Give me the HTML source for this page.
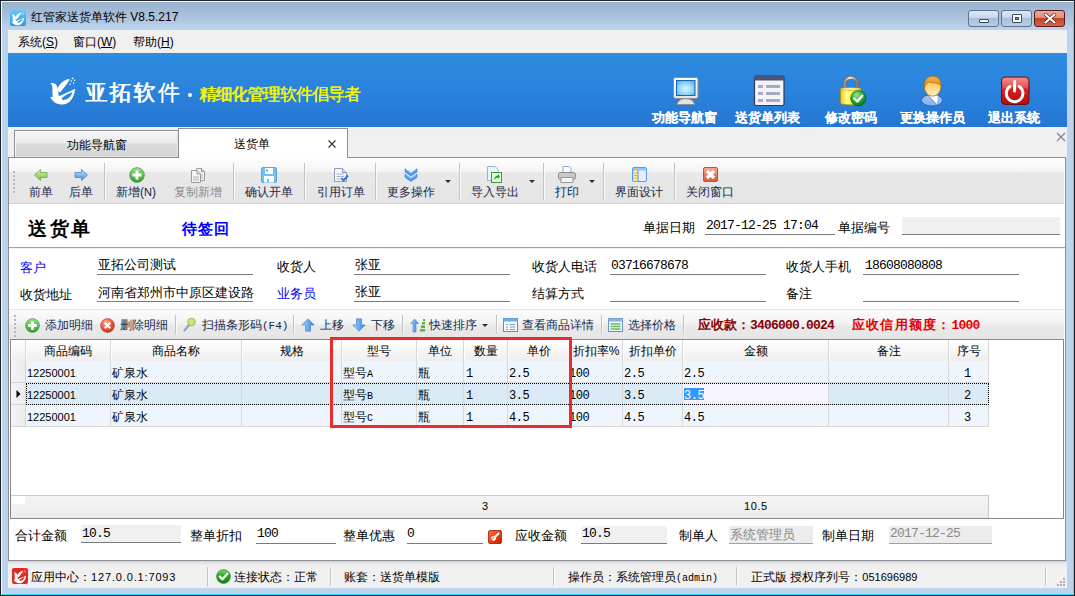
<!DOCTYPE html>
<html><head><meta charset="utf-8">
<style>
*{box-sizing:border-box;margin:0;padding:0}
html,body{width:1075px;height:596px;overflow:hidden}
body{position:relative;font-family:"Liberation Sans",sans-serif;font-size:12px;color:#000;background:#b9d1ea}
.a{position:absolute;white-space:nowrap}
.t12{font-size:12px;line-height:16px}
.t13{font-size:13px;line-height:16px}
.mono{font-family:"Liberation Mono",monospace}
.dig{font-family:"Liberation Mono",monospace;font-size:13px;letter-spacing:-0.8px;line-height:16px}
#frame{position:absolute;left:0;top:0;width:1075px;height:596px;border:1px solid #1e2226;background:#bcd4ec}
#hl{position:absolute;left:1px;top:1px;width:1073px;height:594px;border-left:1px solid #f4faff;border-top:1px solid #f4faff;border-right:1px solid #44d8fa;border-bottom:1px solid #44d8fa}
#title{position:absolute;left:2px;top:2px;width:1071px;height:28px;background:linear-gradient(#98b1cc,#a9c1dc 50%,#bcd4ec)}
#menu{position:absolute;left:8px;top:30px;width:1059px;height:23px;background:#f0f0f0}
#banner{position:absolute;left:8px;top:53px;width:1059px;height:74px;background:linear-gradient(#2d8ce0 0%,#2a83dc 50%,#2576d2 100%)}
#tabstrip{position:absolute;left:8px;top:127px;width:1059px;height:31px;background:#f0f0f0}
.wbtn{position:absolute;top:10px;height:17px;border:1px solid #5f7391;border-radius:3px;background:linear-gradient(#dce8f5 0%,#c6d6ea 45%,#a9bfd9 50%,#b9cde5 100%)}
.ico{position:absolute}
.blbl{position:absolute;color:#fff;font-weight:bold;font-size:13px;line-height:16px;white-space:nowrap;text-shadow:0.3px 0 0 #fff}

#tab1{position:absolute;left:14px;top:130px;width:165px;height:28px;border:1px solid #8a8e98;box-shadow:inset 1px 1px 0 #f8f8f8,inset -1px -1px 0 #e4e4e4;background:linear-gradient(#f6f6f6 0%,#ebebeb 45%,#dcdcdc 50%,#d4d4d4 100%)}
#tab2{position:absolute;left:178px;top:128px;width:170px;height:30px;border:1px solid #8a8e98;border-bottom:none;background:#fff}
#panel{position:absolute;left:8px;top:157px;width:1058px;height:404px;border:1px solid #8a8e98;background:#fff}
#tb{position:absolute;left:9px;top:158px;width:1055px;height:46px;background:linear-gradient(#fefefe 0%,#f4f4f4 30%,#e8e8e8 32%,#e5e5e5 100%);border-bottom:1px solid #d4d4d4}
.sep{position:absolute;width:2px;border-left:1px solid #c4c4c4;border-right:1px solid #fafafa}
.tbl{position:absolute;font-size:12px;line-height:16px;color:#15284a;white-space:nowrap}
.dd{position:absolute;width:0;height:0;border-left:3px solid transparent;border-right:3px solid transparent;border-top:3px solid #1e2f50}

.uline{position:absolute;height:2px;border-bottom:1px solid #7a7a7a;border-top:none}
.fld{position:absolute;background:#f0f0f0;border-bottom:1px solid #7a7a7a}
.lbl{position:absolute;font-size:13px;line-height:16px;white-space:nowrap;color:#000}
.blue{color:#0000ff}

#tb2{position:absolute;left:9px;top:309px;width:1055px;height:30px;background:linear-gradient(#fbfbfb 0%,#f3f3f3 45%,#e9e9e9 55%,#e6e6e6 100%);border-top:1px solid #e4e4e4}
.tl2{position:absolute;font-size:12px;line-height:16px;color:#15284a;white-space:nowrap}
#grid{position:absolute;left:10px;top:339px;width:1054px;height:180px;border:1px solid #828790;background:#fff}
.gh{position:absolute;top:340px;height:22px;background:linear-gradient(#ffffff 0%,#f7f7f7 50%,#eeeeee 100%);border-right:1px solid #d8d8d8;border-bottom:1px solid #d8d8d8;box-shadow:inset 1px 0 0 #fff;font-size:12px;line-height:22px;text-align:center;white-space:nowrap}
.gr{position:absolute;left:26px;width:963px;height:22px;background:#eef5fd;border-bottom:1px solid #d8d8d8}
.gv{position:absolute;width:1px;background:#d8d8d8}
.cell{position:absolute;font-size:12px;line-height:16px;white-space:nowrap}
.num{font-family:"Liberation Mono",monospace;font-size:12px;letter-spacing:-0.5px}
.cnum{font-family:"Liberation Sans",sans-serif;font-size:11px}
</style></head>
<body>

<div id="frame"></div>
<div id="hl"></div><div id="title"></div>
<!-- app icon -->
<svg class="ico" style="left:10px;top:10px;--hole:#36a6ea" width="16" height="16" viewBox="0 0 16 16">
 <defs><linearGradient id="appg" x1="0" y1="0" x2="0" y2="1"><stop offset="0" stop-color="#6cc8f4"/><stop offset="1" stop-color="#2a9ae4"/></linearGradient></defs>
 <rect x="0" y="0" width="16" height="16" rx="2" fill="url(#appg)"/>
 <svg x="-1.5" y="-1" width="20" height="19" viewBox="0 0 40 38">
 <path d="M6.5 11.2 C10 10.4 12.6 12 13.4 15.5 L14.6 22 C14.6 24.5 15.2 26.5 16.5 28.5 L10.5 28.5 C8.6 25.5 8 21 8.4 16.5 C8.5 14.2 7.8 12.4 6.5 11.2 Z" fill="#fff"/>
 <path d="M13 17.5 C15.5 11.5 20 8 25.8 6.8 C24.5 10.5 20.5 15 16.2 20.5 C15 20 13.8 19 13 17.5 Z" fill="#fff"/>
 <path d="M6.2 25 C8.5 30 13 32.5 18.5 32.5 C25.5 32.5 30.2 26 31.2 16.8 C27 19.5 21 21.2 16 23.8 C14 24.8 12 25.2 10 24.8 C8.6 24.8 7.2 25 6.2 25 Z" fill="#fff"/>
 <path d="M17.6 26.2 C20.8 23.2 24.8 21.2 28.4 20.2 C27 25 23.5 27.8 18.8 28 C18.2 27.5 17.8 26.8 17.6 26.2 Z" fill="#36a6ea"/>
 <g fill="#fff"><circle cx="28.5" cy="6.3" r="0.9"/><circle cx="30.6" cy="8.3" r="0.8"/><circle cx="27.3" cy="9" r="0.8"/><circle cx="29.6" cy="11" r="0.8"/><circle cx="26.2" cy="12.2" r="0.7"/></g>
</svg>
</svg>
<div class="a t12" style="left:31px;top:9px;color:#000">红管家送货单软件 V8.5.217</div>
<div class="wbtn" style="left:968px;width:31px"><div style="position:absolute;left:10px;top:8px;width:10px;height:4px;background:#fff;border:1px solid #3b4a5e;border-radius:1px"></div></div>
<div class="wbtn" style="left:1001px;width:31px"><div style="position:absolute;left:10px;top:3px;width:10px;height:9px;background:#fff;border:1px solid #3b4a5e;border-radius:1px"><div style="position:absolute;left:2px;top:2px;width:4px;height:3px;background:#7b93b5;border:1px solid #3b4a5e"></div></div></div>
<div class="wbtn" style="left:1034px;width:31px;border-color:#5a1a1a;background:linear-gradient(#eba89a 0%,#df8d7c 45%,#c4432b 50%,#d2644a 100%)">
 <svg style="position:absolute;left:9px;top:2px" width="12" height="11" viewBox="0 0 12 11"><path d="M1.5 1.5 L10.5 9.5 M10.5 1.5 L1.5 9.5" stroke="#5a2018" stroke-width="3.6" stroke-linecap="round"/><path d="M1.5 1.5 L10.5 9.5 M10.5 1.5 L1.5 9.5" stroke="#fff" stroke-width="2.2" stroke-linecap="round"/></svg>
</div>

<div id="menu"></div>
<div class="a t12" style="left:18px;top:34px">系统(<u>S</u>)</div>
<div class="a t12" style="left:73px;top:34px">窗口(<u>W</u>)</div>
<div class="a t12" style="left:133px;top:34px">帮助(<u>H</u>)</div>

<div id="banner"></div>
<!-- banner logo -->
<svg class="ico" style="left:44px;top:72px" width="40" height="38" viewBox="0 0 40 38">
 <path d="M6.5 11.2 C10 10.4 12.6 12 13.4 15.5 L14.6 22 C14.6 24.5 15.2 26.5 16.5 28.5 L10.5 28.5 C8.6 25.5 8 21 8.4 16.5 C8.5 14.2 7.8 12.4 6.5 11.2 Z" fill="#fff"/>
 <path d="M13 17.5 C15.5 11.5 20 8 25.8 6.8 C24.5 10.5 20.5 15 16.2 20.5 C15 20 13.8 19 13 17.5 Z" fill="#fff"/>
 <path d="M6.2 25 C8.5 30 13 32.5 18.5 32.5 C25.5 32.5 30.2 26 31.2 16.8 C27 19.5 21 21.2 16 23.8 C14 24.8 12 25.2 10 24.8 C8.6 24.8 7.2 25 6.2 25 Z" fill="#fff"/>
 <path d="M17.6 26.2 C20.8 23.2 24.8 21.2 28.4 20.2 C27 25 23.5 27.8 18.8 28 C18.2 27.5 17.8 26.8 17.6 26.2 Z" fill="#2a86dc"/>
 <g fill="#fff"><circle cx="28.5" cy="6.3" r="0.9"/><circle cx="30.6" cy="8.3" r="0.8"/><circle cx="27.3" cy="9" r="0.8"/><circle cx="29.6" cy="11" r="0.8"/><circle cx="26.2" cy="12.2" r="0.7"/></g>
</svg>
<div class="a" style="left:85px;top:79px;font-size:22px;line-height:28px;letter-spacing:2.2px;color:#fff;text-shadow:0.7px 0 0 #fff">亚拓软件</div>
<div class="a" style="left:188px;top:93px;width:4px;height:4px;border-radius:2px;background:#fff"></div>
<div class="a" style="left:199px;top:85px;font-size:17px;line-height:20px;letter-spacing:-0.9px;color:#f6f800;text-shadow:0.5px 0 0 #f6f800">精细化管理软件倡导者</div>

<!-- monitor -->
<svg class="ico" style="left:669px;top:75px" width="32" height="32" viewBox="0 0 32 32">
 <defs><radialGradient id="scr" cx="0.5" cy="0.55" r="0.6"><stop offset="0" stop-color="#d8f4ff"/><stop offset="0.6" stop-color="#98d8f8"/><stop offset="1" stop-color="#5ab4ec"/></radialGradient>
 <linearGradient id="mfr" x1="0" y1="0" x2="0" y2="1"><stop offset="0" stop-color="#ffffff"/><stop offset="1" stop-color="#e4e4e4"/></linearGradient></defs>
 <rect x="4.5" y="2.5" width="24.5" height="21" rx="2" fill="url(#mfr)" stroke="#8c8c8c" stroke-width="1"/>
 <rect x="7.5" y="5.5" width="18.5" height="15" fill="url(#scr)" stroke="#1a64b0" stroke-width="1"/>
 <path d="M8 29.5 C9 25.5 12 23.8 16.8 23.8 C21.5 23.8 24.5 25.5 25.5 29.5 Z" fill="#e4e4e4" stroke="#8c8c8c" stroke-width="0.9"/>
</svg>
<div class="blbl" style="left:652px;top:110px">功能导航窗</div>

<!-- list -->
<svg class="ico" style="left:753px;top:75px" width="32" height="32" viewBox="0 0 32 32">
 <rect x="1.5" y="1" width="29.5" height="29.5" rx="1.5" fill="#f4f4f8" stroke="#2e3a58" stroke-width="1.2"/>
 <rect x="1.5" y="1" width="29.5" height="4.5" fill="#4a5478"/>
 <rect x="5" y="10" width="5" height="3" fill="#a9a9c6"/><rect x="13" y="10" width="14" height="3" fill="#a9a9c6"/>
 <rect x="5" y="17" width="5" height="3" fill="#a9a9c6"/><rect x="13" y="17" width="14" height="3" fill="#a9a9c6"/>
 <rect x="5" y="24" width="5" height="3" fill="#a9a9c6"/><rect x="13" y="24" width="14" height="3" fill="#a9a9c6"/>
</svg>
<div class="blbl" style="left:735px;top:110px">送货单列表</div>

<!-- lock -->
<svg class="ico" style="left:837px;top:75px" width="32" height="32" viewBox="0 0 32 32">
 <defs><linearGradient id="lk" x1="0" y1="0" x2="1" y2="0"><stop offset="0" stop-color="#e8cc10"/><stop offset="0.3" stop-color="#ffff90"/><stop offset="0.65" stop-color="#fae828"/><stop offset="1" stop-color="#d8b000"/></linearGradient>
 <linearGradient id="shk" x1="0" y1="0" x2="1" y2="0"><stop offset="0" stop-color="#8a8a8a"/><stop offset="0.4" stop-color="#e8e8e8"/><stop offset="1" stop-color="#7a7a7a"/></linearGradient>
 <radialGradient id="gc" cx="0.4" cy="0.3" r="0.75"><stop offset="0" stop-color="#8ee890"/><stop offset="0.55" stop-color="#2aa83a"/><stop offset="1" stop-color="#0e6a1a"/></radialGradient></defs>
 <path d="M7.5 15 L7.5 8.5 C7.5 0.8 20.5 0.8 20.5 8.5 L20.5 15" fill="none" stroke="#6a6a6a" stroke-width="4"/>
 <path d="M7.5 15 L7.5 8.5 C7.5 0.8 20.5 0.8 20.5 8.5 L20.5 15" fill="none" stroke="url(#shk)" stroke-width="2.4"/>
 <path d="M3.5 14 L24 14 L24 28 C24 30.5 3.5 30.5 3.5 28Z" fill="url(#lk)" stroke="#a88a10" stroke-width="0.8"/>
 <ellipse cx="13.75" cy="14" rx="10.25" ry="1.3" fill="#fff8a0" stroke="#b89a18" stroke-width="0.6"/>
 <circle cx="21.3" cy="23.3" r="7.6" fill="url(#gc)" stroke="#0c5a14" stroke-width="0.7"/>
 <path d="M17.3 23.5 L20.3 26.5 L25.3 20.8" fill="none" stroke="#fff" stroke-width="2.4" stroke-linecap="round" stroke-linejoin="round"/>
</svg>
<div class="blbl" style="left:825px;top:110px">修改密码</div>

<!-- person -->
<svg class="ico" style="left:916px;top:75px" width="32" height="32" viewBox="0 0 32 32">
 <defs><linearGradient id="fc" x1="0" y1="0" x2="0" y2="1"><stop offset="0" stop-color="#ffb830"/><stop offset="1" stop-color="#fff0c0"/></linearGradient>
 <linearGradient id="sh" x1="0" y1="0" x2="0" y2="1"><stop offset="0" stop-color="#a8c4f0"/><stop offset="1" stop-color="#80b0f0"/></linearGradient>
 <linearGradient id="hr" x1="0" y1="0" x2="0" y2="1"><stop offset="0" stop-color="#f0b050"/><stop offset="1" stop-color="#d88a10"/></linearGradient></defs>
 <ellipse cx="16" cy="25.3" rx="10.6" ry="5.8" fill="url(#sh)" stroke="#2a58b8" stroke-width="0.9"/>
 <path d="M12.5 20.5 L22 20.5 L21 29.5Z" fill="#fff"/>
 <path d="M12.5 20.5 L21 29.5" stroke="#5a80c8" stroke-width="0.6"/>
 <ellipse cx="16.6" cy="11.2" rx="8.4" ry="10" fill="url(#fc)" stroke="#b87010" stroke-width="0.8"/>
 <path d="M8.3 12.5 C7.8 5 11.5 1.3 16.6 1.3 C22 1.3 25 4.5 25 10.5 C23 8.5 20 8.2 17.5 7.8 C15 7.4 13 6.8 11 8.2 C10 9 9.5 11 8.3 12.5Z" fill="url(#hr)" stroke="#a86010" stroke-width="0.6"/>
</svg>
<div class="blbl" style="left:900px;top:110px">更换操作员</div>

<!-- power -->
<svg class="ico" style="left:998px;top:75px" width="32" height="32" viewBox="0 0 32 32">
 <defs><linearGradient id="pw" x1="0" y1="0" x2="0" y2="1"><stop offset="0" stop-color="#f07878"/><stop offset="0.45" stop-color="#d82020"/><stop offset="1" stop-color="#b00c0c"/></linearGradient></defs>
 <rect x="3.5" y="2" width="27.5" height="27.5" rx="3.5" fill="url(#pw)" stroke="#7a0a0a" stroke-width="1"/>
 <path d="M4.5 14 C10 11 24 11 30 14 L30 5 C30 3.5 29 3 27.5 3 L7 3 C5.5 3 4.5 3.5 4.5 5Z" fill="#fff" opacity="0.18"/>
 <path d="M12 11.5 A8.3 8.3 0 1 0 21.2 11.5" fill="none" stroke="#fff" stroke-width="3" stroke-linecap="round"/>
 <path d="M16.6 6.5 L16.6 16" stroke="#fff" stroke-width="3" stroke-linecap="round"/>
</svg>
<div class="blbl" style="left:988px;top:110px">退出系统</div>

<div id="tabstrip"></div>
<div id="panel"></div>
<div id="tab1"></div>
<div class="a t12" style="left:67px;top:137px;color:#000">功能导航窗</div>
<div id="tab2"></div>
<div class="a t12" style="left:234px;top:136px;color:#000">送货单</div>
<svg class="ico" style="left:327px;top:139px" width="10" height="10" viewBox="0 0 10 10"><path d="M1.5 1.5 L8.5 8.5 M8.5 1.5 L1.5 8.5" stroke="#333" stroke-width="1.1"/></svg>
<svg class="ico" style="left:1056px;top:132px" width="10" height="10" viewBox="0 0 10 10"><path d="M1 1 L9 9 M9 1 L1 9" stroke="#7a8290" stroke-width="1.1"/></svg>

<div id="tb"></div>
<!-- gripper -->
<svg class="ico" style="left:13px;top:170px" width="3" height="24" viewBox="0 0 3 24">
 <g fill="#b8b8b8"><rect x="0" y="1" width="2" height="2"/><rect x="0" y="5" width="2" height="2"/><rect x="0" y="9" width="2" height="2"/><rect x="0" y="13" width="2" height="2"/><rect x="0" y="17" width="2" height="2"/><rect x="0" y="21" width="2" height="2"/></g>
</svg>
<!-- prev -->
<svg class="ico" style="left:33px;top:167px" width="16" height="16" viewBox="0 0 16 16">
 <defs><linearGradient id="ga" x1="0" y1="0" x2="0" y2="1"><stop offset="0" stop-color="#d8f8b0"/><stop offset="1" stop-color="#70c040"/></linearGradient></defs>
 <path d="M1.5 8 L7.5 2.5 L7.5 5.5 L14 5.5 L14 10.5 L7.5 10.5 L7.5 13.5Z" fill="url(#ga)" stroke="#6aa84a" stroke-width="0.8"/>
</svg>
<div class="tbl" style="left:29px;top:184px">前单</div>
<svg class="ico" style="left:73px;top:167px" width="16" height="16" viewBox="0 0 16 16">
 <defs><linearGradient id="gb" x1="0" y1="0" x2="0" y2="1"><stop offset="0" stop-color="#cfe6ff"/><stop offset="1" stop-color="#3a88e0"/></linearGradient></defs>
 <path d="M14.5 8 L8.5 2.5 L8.5 5.5 L2 5.5 L2 10.5 L8.5 10.5 L8.5 13.5Z" fill="url(#gb)" stroke="#4a88c8" stroke-width="0.8"/>
</svg>
<div class="tbl" style="left:69px;top:184px">后单</div>
<div class="sep" style="left:104px;top:163px;height:37px"></div>
<!-- add -->
<svg class="ico" style="left:129px;top:167px" width="16" height="16" viewBox="0 0 16 16">
 <defs><linearGradient id="gad" x1="0" y1="0" x2="0" y2="1"><stop offset="0" stop-color="#98e488"/><stop offset="0.5" stop-color="#5cc050"/><stop offset="1" stop-color="#3a9a34"/></linearGradient></defs>
 <circle cx="8" cy="8" r="7.4" fill="url(#gad)" stroke="#3a8a3a" stroke-width="0.6"/>
 <path d="M8 3.5 L8 12.5 M3.5 8 L12.5 8" stroke="#fff" stroke-width="3"/>
</svg>
<div class="tbl" style="left:116px;top:184px">新增(<span style="font-size:11px">N</span>)</div>
<!-- copy -->
<svg class="ico" style="left:190px;top:167px" width="16" height="16" viewBox="0 0 16 16">
 <path d="M6.5 1.5 L11.5 1.5 L14.5 4.5 L14.5 13.5 L6.5 13.5Z" fill="#f2f2f2" stroke="#9a9a9a"/>
 <path d="M11.5 1.5 L11.5 4.5 L14.5 4.5" fill="#ddd" stroke="#9a9a9a"/>
 <path d="M1.5 3.5 L7 3.5 L10.5 7 L10.5 15.5 L1.5 15.5Z" fill="#f6f6f6" stroke="#9a9a9a"/>
 <path d="M7 3.5 L7 7 L10.5 7" fill="#e0e0e0" stroke="#9a9a9a"/>
 <rect x="3" y="9" width="6" height="5" fill="#d4d4d4"/>
 <path d="M12 6.5 L12 12" stroke="#c0c0c0"/>
</svg>
<div class="tbl" style="left:174px;top:184px;color:#8c8c8c">复制新增</div>
<div class="sep" style="left:233px;top:163px;height:37px"></div>
<!-- save -->
<svg class="ico" style="left:261px;top:167px" width="16" height="16" viewBox="0 0 16 16">
 <rect x="0.5" y="0.5" width="15" height="15" rx="1.5" fill="#6cc0f2" stroke="#58a8e0"/>
 <rect x="4" y="1" width="8" height="6" fill="#fff"/>
 <rect x="5" y="2.5" width="2" height="2" fill="#58a8e0"/>
 <rect x="3" y="9" width="10" height="6.5" fill="#fff"/>
 <rect x="6" y="12" width="2" height="3.5" fill="#6cc0f2"/>
</svg>
<div class="tbl" style="left:245px;top:184px">确认开单</div>
<div class="sep" style="left:304px;top:163px;height:37px"></div>
<!-- quote -->
<svg class="ico" style="left:333px;top:167px" width="16" height="16" viewBox="0 0 16 16">
 <path d="M1.5 1.5 L9.5 1.5 L13.5 5.5 L13.5 14.5 L1.5 14.5Z" fill="#f4f6fb" stroke="#8e9ab8"/>
 <path d="M9.5 1.5 L9.5 5.5 L13.5 5.5" fill="#dde2ee" stroke="#8e9ab8"/>
 <path d="M3.5 7 L11 7 M3.5 9.5 L11 9.5 M3.5 12 L8 12" stroke="#aab4cc"/>
 <path d="M8.5 11 L10.5 13.5 L15 8.5" fill="none" stroke="#2a72d8" stroke-width="1.9"/>
</svg>
<div class="tbl" style="left:317px;top:184px">引用订单</div>
<div class="sep" style="left:375px;top:163px;height:37px"></div>
<!-- more -->
<svg class="ico" style="left:403px;top:167px" width="16" height="16" viewBox="0 0 16 16">
 <path d="M2 1.8 L8 5.8 L14 1.8 L14 5 L8 9 L2 5Z" fill="#4a9af0" stroke="#3a80d8" stroke-width="0.6" stroke-linejoin="round"/>
 <path d="M2 7.2 L8 11.2 L14 7.2 L14 10.4 L8 14.4 L2 10.4Z" fill="#4a9af0" stroke="#3a80d8" stroke-width="0.6" stroke-linejoin="round"/>
 <path d="M3 2.6 L8 6 L13 2.6 M3 8 L8 11.4 L13 8" fill="none" stroke="#a8d4ff" stroke-width="0.8"/>
</svg>
<div class="tbl" style="left:387px;top:184px">更多操作</div>
<div class="dd" style="left:445px;top:180px"></div>
<div class="sep" style="left:459px;top:163px;height:37px"></div>
<!-- import export -->
<svg class="ico" style="left:486px;top:166px" width="17" height="17" viewBox="0 0 17 17">
 <path d="M1.5 0.5 L9 0.5 L12 3.5 L12 14.5 L1.5 14.5Z" fill="#eef4fc" stroke="#9ab0d0"/>
 <rect x="5.5" y="6.5" width="10" height="10" fill="#e8f8e0" stroke="#3a9a3a"/>
 <path d="M8 14 C8 11 10 9.5 12 9.5 L12 8 L14 10.5 L12 13 L12 11.5 C10.5 11.5 9 12.5 8 14Z" fill="#2a9a2a"/>
</svg>
<div class="tbl" style="left:471px;top:184px">导入导出</div>
<div class="dd" style="left:529px;top:180px"></div>
<div class="sep" style="left:543px;top:163px;height:37px"></div>
<!-- print -->
<svg class="ico" style="left:558px;top:166px" width="18" height="17" viewBox="0 0 18 17">
 <path d="M5 0.5 L11 0.5 L13 2.5 L13 7 L5 7Z" fill="#fff" stroke="#8aa8d8"/>
 <rect x="0.5" y="6.5" width="17" height="7" rx="2" fill="#c8c8c8" stroke="#8a8a8a"/>
 <rect x="3" y="11.5" width="12" height="5" fill="#f4f4f4" stroke="#9a9a9a"/>
</svg>
<div class="tbl" style="left:555px;top:184px">打印</div>
<div class="dd" style="left:589px;top:180px"></div>
<div class="sep" style="left:603px;top:163px;height:37px"></div>
<!-- design -->
<svg class="ico" style="left:632px;top:167px" width="15" height="15" viewBox="0 0 15 15">
 <rect x="0.5" y="0.5" width="14" height="14" rx="1.5" fill="#eceaff" stroke="#4aa0f0"/>
 <rect x="1" y="1" width="13" height="2.5" fill="#8ac8f8"/>
 <rect x="1.5" y="3.5" width="4" height="10.5" fill="#fff4b0" stroke="#f0c040" stroke-width="0.6"/>
 <path d="M6 3.5 L6 14" stroke="#4aa0f0"/>
 <path d="M2.5 6 L4.5 6 M2.5 8.5 L4.5 8.5 M2.5 11 L4.5 11" stroke="#e86a30" stroke-width="1.2"/>
</svg>
<div class="tbl" style="left:615px;top:184px">界面设计</div>
<div class="sep" style="left:674px;top:163px;height:37px"></div>
<!-- close -->
<svg class="ico" style="left:703px;top:167px" width="15" height="15" viewBox="0 0 15 15">
 <defs><linearGradient id="gx" x1="0" y1="0" x2="0" y2="1"><stop offset="0" stop-color="#f8a890"/><stop offset="1" stop-color="#e05838"/></linearGradient></defs>
 <rect x="0.5" y="0.5" width="14" height="14" rx="1.5" fill="url(#gx)" stroke="#c84a30"/>
 <path d="M4 4 L11 11 M11 4 L4 11" stroke="#fff" stroke-width="3.2"/>
</svg>
<div class="tbl" style="left:686px;top:184px">关闭窗口</div>



<!-- header -->
<div class="a" style="left:28px;top:218px;font-size:19px;line-height:22px;font-weight:bold;letter-spacing:2.5px">送货单</div>
<div class="a" style="left:182px;top:220px;font-size:15px;line-height:18px;font-weight:bold;color:#0000ff;letter-spacing:1px">待签回</div>
<div class="lbl" style="left:643px;top:220px">单据日期</div>
<div class="a dig" style="left:706px;top:218px">2017-12-25 17:04</div>
<div class="a" style="left:705px;top:233px;width:130px;height:2px;border-bottom:1px solid #7a7a7a"></div>
<div class="lbl" style="left:838px;top:220px">单据编号</div>
<div class="fld" style="left:902px;top:217px;width:158px;height:18px"></div>
<div class="a" style="left:9px;top:247px;width:1056px;height:2px;border-top:1px solid #a0a0a0;border-bottom:1px solid #f0f0f0"></div>

<!-- form row 1 -->
<div class="lbl blue" style="left:20px;top:260px">客户</div>
<div class="lbl" style="left:98px;top:257px">亚拓公司测试</div>
<div class="a" style="left:97px;top:273px;width:156px;height:2px;border-bottom:1px solid #7a7a7a"></div>
<div class="lbl" style="left:277px;top:259px">收货人</div>
<div class="lbl" style="left:355px;top:257px">张亚</div>
<div class="a" style="left:354px;top:273px;width:156px;height:2px;border-bottom:1px solid #7a7a7a"></div>
<div class="lbl" style="left:532px;top:259px">收货人电话</div>
<div class="a dig" style="left:611px;top:258px">03716678678</div>
<div class="a" style="left:610px;top:273px;width:156px;height:2px;border-bottom:1px solid #7a7a7a"></div>
<div class="lbl" style="left:786px;top:259px">收货人手机</div>
<div class="a dig" style="left:865px;top:258px">18608080808</div>
<div class="a" style="left:863px;top:273px;width:156px;height:2px;border-bottom:1px solid #7a7a7a"></div>
<!-- form row 2 -->
<div class="lbl" style="left:20px;top:287px">收货地址</div>
<div class="lbl" style="left:98px;top:285px">河南省郑州市中原区建设路</div>
<div class="a" style="left:97px;top:300px;width:156px;height:2px;border-bottom:1px solid #7a7a7a"></div>
<div class="lbl blue" style="left:277px;top:286px">业务员</div>
<div class="lbl" style="left:355px;top:284px">张亚</div>
<div class="a" style="left:354px;top:300px;width:156px;height:2px;border-bottom:1px solid #7a7a7a"></div>
<div class="lbl" style="left:532px;top:286px">结算方式</div>
<div class="a" style="left:610px;top:300px;width:156px;height:2px;border-bottom:1px solid #7a7a7a"></div>
<div class="lbl" style="left:786px;top:286px">备注</div>
<div class="a" style="left:863px;top:300px;width:156px;height:2px;border-bottom:1px solid #7a7a7a"></div>

<!-- detail toolbar -->
<div id="tb2"></div>
<svg class="ico" style="left:14px;top:314px" width="3" height="23" viewBox="0 0 3 23">
 <g fill="#b8b8b8"><rect x="0" y="1" width="2" height="2"/><rect x="0" y="5" width="2" height="2"/><rect x="0" y="9" width="2" height="2"/><rect x="0" y="13" width="2" height="2"/><rect x="0" y="17" width="2" height="2"/><rect x="0" y="21" width="2" height="2"/></g>
</svg>
<svg class="ico" style="left:25px;top:318px" width="15" height="15" viewBox="0 0 16 16">
 <circle cx="8" cy="8" r="7.4" fill="url(#gad)" stroke="#3a8a3a" stroke-width="0.6"/>
 <path d="M8 3.5 L8 12.5 M3.5 8 L12.5 8" stroke="#fff" stroke-width="3"/>
</svg>
<div class="tl2" style="left:45px;top:317px">添加明细</div>
<svg class="ico" style="left:100px;top:318px" width="15" height="15" viewBox="0 0 16 16">
 <defs><radialGradient id="gdl" cx="0.4" cy="0.3" r="0.75"><stop offset="0" stop-color="#ffb0a0"/><stop offset="0.55" stop-color="#e85a40"/><stop offset="1" stop-color="#b83020"/></radialGradient></defs>
 <circle cx="8" cy="8" r="7.4" fill="url(#gdl)" stroke="#b03a2a" stroke-width="0.6"/>
 <path d="M5 5 L11 11 M11 5 L5 11" stroke="#fff" stroke-width="2.4"/>
</svg>
<div class="tl2" style="left:120px;top:317px">删除明细</div>
<div class="sep" style="left:175px;top:315px;height:19px"></div>
<svg class="ico" style="left:183px;top:317px" width="13" height="15" viewBox="0 0 13 15">
 <path d="M1.5 13.5 L6 8" stroke="#9aa0c8" stroke-width="2.2" stroke-linecap="round"/>
 <circle cx="8.5" cy="5" r="3.8" fill="#c8e880" stroke="#8ab040" stroke-width="0.8"/>
</svg>
<div class="tl2" style="left:202px;top:317px">扫描条形码<span class="mono" style="font-size:11px">(F4)</span></div>
<div class="sep" style="left:293px;top:315px;height:19px"></div>
<svg class="ico" style="left:301px;top:318px" width="14" height="14" viewBox="0 0 14 14">
 <defs><linearGradient id="gu" x1="0" y1="0" x2="1" y2="0"><stop offset="0" stop-color="#a8d8ff"/><stop offset="1" stop-color="#2a80e0"/></linearGradient></defs>
 <path d="M7 0.8 L13.2 7 L9.5 7 L9.5 13.2 L4.5 13.2 L4.5 7 L0.8 7Z" fill="url(#gu)" stroke="#3a7ac8" stroke-width="0.6"/>
</svg>
<div class="tl2" style="left:320px;top:317px">上移</div>
<svg class="ico" style="left:352px;top:318px" width="14" height="14" viewBox="0 0 14 14">
 <path d="M7 13.2 L13.2 7 L9.5 7 L9.5 0.8 L4.5 0.8 L4.5 7 L0.8 7Z" fill="url(#gu)" stroke="#3a7ac8" stroke-width="0.6"/>
</svg>
<div class="tl2" style="left:371px;top:317px">下移</div>
<div class="sep" style="left:402px;top:315px;height:19px"></div>
<svg class="ico" style="left:410px;top:318px" width="16" height="15" viewBox="0 0 16 15">
 <path d="M4.5 1 L8.5 5.5 L6 5.5 L6 14 L3 14 L3 5.5 L0.5 5.5Z" fill="url(#gu)" stroke="#3a7ac8" stroke-width="0.5"/>
 <rect x="10" y="11" width="5" height="2.5" fill="#5ab040"/><rect x="11" y="7.5" width="4" height="2.5" fill="#5ab040"/><rect x="12" y="4" width="3" height="2.5" fill="#5ab040"/><rect x="13" y="1" width="2" height="2" fill="#5ab040"/>
</svg>
<div class="tl2" style="left:429px;top:317px">快速排序</div>
<div class="dd" style="left:482px;top:324px"></div>
<div class="sep" style="left:496px;top:315px;height:19px"></div>
<svg class="ico" style="left:503px;top:318px" width="15" height="14" viewBox="0 0 15 14">
 <rect x="0.5" y="0.5" width="14" height="13" fill="#f4f8ff" stroke="#4a90d8"/>
 <rect x="0.5" y="0.5" width="14" height="3" fill="#6ab0f0"/>
 <path d="M3 6.5 L5 6.5 M6.5 6.5 L12 6.5 M3 9 L5 9 M6.5 9 L12 9 M3 11.5 L5 11.5 M6.5 11.5 L12 11.5" stroke="#8a9ab8"/>
</svg>
<div class="tl2" style="left:522px;top:317px">查看商品详情</div>
<div class="sep" style="left:601px;top:315px;height:19px"></div>
<svg class="ico" style="left:608px;top:318px" width="15" height="14" viewBox="0 0 15 14">
 <rect x="0.5" y="0.5" width="14" height="13" fill="#f0f6ff" stroke="#6a90c0"/>
 <rect x="0.5" y="0.5" width="14" height="3" fill="#8ab4e0"/>
 <path d="M2.5 6 L12.5 6 M2.5 8.5 L12.5 8.5 M2.5 11 L12.5 11" stroke="#70b860" stroke-width="1.4"/>
</svg>
<div class="tl2" style="left:628px;top:317px">选择价格</div>
<div class="sep" style="left:683px;top:315px;height:19px"></div>
<div class="a" style="left:698px;top:317px;font-size:13px;line-height:16px;font-weight:bold;color:#8b0000">应收款：<span class="mono" style="letter-spacing:-0.8px">3406000.0024</span></div>
<div class="a" style="left:852px;top:317px;font-size:13px;line-height:16px;font-weight:bold;color:#e80000;letter-spacing:1.2px">应收信用额度：<span class="mono" style="letter-spacing:-0.8px">1000</span></div>
<!-- grid -->
<div id="grid"></div>
<div class="gh" style="left:11px;width:15px"></div>
<div class="gh" style="left:26px;width:85px">商品编码</div>
<div class="gh" style="left:111px;width:131px">商品名称</div>
<div class="gh" style="left:242px;width:100px">规格</div>
<div class="gh" style="left:342px;width:75px">型号</div>
<div class="gh" style="left:417px;width:47px">单位</div>
<div class="gh" style="left:464px;width:44px">数量</div>
<div class="gh" style="left:508px;width:62px">单价</div>
<div class="gh" style="left:570px;width:53px">折扣率%</div>
<div class="gh" style="left:623px;width:60px">折扣单价</div>
<div class="gh" style="left:683px;width:146px">金额</div>
<div class="gh" style="left:829px;width:120px">备注</div>
<div class="gh" style="left:949px;width:40px">序号</div>
<div class="gr" style="top:361px;background:#eef5fd"></div>
<div class="a" style="left:11px;top:361px;width:15px;height:22px;background:linear-gradient(90deg,#f4f4f4,#ececec);border-right:1px solid #d5d5d5;border-bottom:1px solid #d5d5d5"></div>
<div class="gr" style="top:383px;background:#daeaf6"></div>
<div class="a" style="left:11px;top:383px;width:15px;height:22px;background:linear-gradient(90deg,#f4f4f4,#ececec);border-right:1px solid #d5d5d5;border-bottom:1px solid #d5d5d5"></div>
<div class="gr" style="top:405px;background:#eef5fd"></div>
<div class="a" style="left:11px;top:405px;width:15px;height:22px;background:linear-gradient(90deg,#f4f4f4,#ececec);border-right:1px solid #d5d5d5;border-bottom:1px solid #d5d5d5"></div>
<div class="gv" style="left:110px;top:361px;height:66px"></div>
<div class="gv" style="left:241px;top:361px;height:66px"></div>
<div class="gv" style="left:341px;top:361px;height:66px"></div>
<div class="gv" style="left:416px;top:361px;height:66px"></div>
<div class="gv" style="left:463px;top:361px;height:66px"></div>
<div class="gv" style="left:507px;top:361px;height:66px"></div>
<div class="gv" style="left:569px;top:361px;height:66px"></div>
<div class="gv" style="left:622px;top:361px;height:66px"></div>
<div class="gv" style="left:682px;top:361px;height:66px"></div>
<div class="gv" style="left:828px;top:361px;height:66px"></div>
<div class="gv" style="left:948px;top:361px;height:66px"></div>
<div class="gv" style="left:988px;top:361px;height:66px"></div>
<div class="a" style="left:683px;top:384px;width:145px;height:20px;background:#f6f4fe"></div>
<div class="a" style="left:26px;top:383px;width:963px;height:22px;border:1px dotted #000"></div>
<svg class="ico" style="left:16px;top:390px" width="5" height="8" viewBox="0 0 5 8"><path d="M0.5 0 L4.5 4 L0.5 8Z" fill="#000"/></svg>
<div class="cell cnum" style="left:27px;top:365px">12250001</div>
<div class="cell" style="left:112px;top:365px">矿泉水</div>
<div class="cell" style="left:343px;top:365px">型号<span class="mono" style="font-size:10px">A</span></div>
<div class="cell" style="left:418px;top:365px">瓶</div>
<div class="cell num" style="left:466px;top:366px">1</div>
<div class="cell num" style="left:509px;top:366px">2.5</div>
<div class="cell num" style="left:569px;top:366px">100</div>
<div class="cell num" style="left:624px;top:366px">2.5</div>
<div class="cell num" style="left:684px;top:366px">2.5</div>
<div class="cell num" style="left:964px;top:366px">1</div>
<div class="cell cnum" style="left:27px;top:387px">12250001</div>
<div class="cell" style="left:112px;top:387px">矿泉水</div>
<div class="cell" style="left:343px;top:387px">型号<span class="mono" style="font-size:10px">B</span></div>
<div class="cell" style="left:418px;top:387px">瓶</div>
<div class="cell num" style="left:466px;top:388px">1</div>
<div class="cell num" style="left:509px;top:388px">3.5</div>
<div class="cell num" style="left:569px;top:388px">100</div>
<div class="cell num" style="left:624px;top:388px">3.5</div>
<div class="a" style="left:684px;top:388px;width:20px;height:12px;background:#3399ff"></div>
<div class="cell num" style="left:684px;top:388px;color:#fff">3.5</div>
<div class="cell num" style="left:964px;top:388px">2</div>
<div class="cell cnum" style="left:27px;top:409px">12250001</div>
<div class="cell" style="left:112px;top:409px">矿泉水</div>
<div class="cell" style="left:343px;top:409px">型号<span class="mono" style="font-size:10px">C</span></div>
<div class="cell" style="left:418px;top:409px">瓶</div>
<div class="cell num" style="left:466px;top:410px">1</div>
<div class="cell num" style="left:509px;top:410px">4.5</div>
<div class="cell num" style="left:569px;top:410px">100</div>
<div class="cell num" style="left:624px;top:410px">4.5</div>
<div class="cell num" style="left:684px;top:410px">4.5</div>
<div class="cell num" style="left:964px;top:410px">3</div>
<div class="a" style="left:330px;top:337px;width:242px;height:91px;border:3px solid #ee2a2a"></div>
<div class="a" style="left:11px;top:495px;width:978px;height:23px;background:linear-gradient(#f4f4f4,#ececec);border-top:1px solid #c8c8c8;border-right:1px solid #c8c8c8"></div>
<div class="a" style="left:12px;top:496px;width:13px;height:8px;background:#fff"></div>
<div class="cell cnum" style="left:482px;top:498px">3</div>
<div class="cell cnum" style="left:744px;top:498px;letter-spacing:0.6px">10.5</div>

<!-- footer -->
<div class="lbl" style="left:15px;top:528px">合计金额</div>
<div class="fld" style="left:81px;top:525px;width:100px;height:18px"></div>
<div class="a dig" style="left:82px;top:526px">10.5</div>
<div class="lbl" style="left:190px;top:528px">整单折扣</div>
<div class="a" style="left:256px;top:542px;width:80px;height:2px;border-bottom:1px solid #7a7a7a"></div>
<div class="a dig" style="left:257px;top:526px">100</div>
<div class="lbl" style="left:343px;top:528px">整单优惠</div>
<div class="a" style="left:407px;top:542px;width:76px;height:2px;border-bottom:1px solid #7a7a7a"></div>
<div class="a dig" style="left:407px;top:526px">0</div>
<svg class="ico" style="left:488px;top:530px" width="14" height="14" viewBox="0 0 14 14">
 <defs><linearGradient id="gr2" x1="0" y1="0" x2="1" y2="1"><stop offset="0" stop-color="#ff7040"/><stop offset="0.6" stop-color="#e83a10"/><stop offset="1" stop-color="#b02000"/></linearGradient></defs>
 <rect x="0.5" y="0.5" width="13" height="13" rx="1.5" fill="url(#gr2)" stroke="#a01a00" stroke-width="0.8"/>
 <path d="M7 7 L10.5 3.5" stroke="#fff" stroke-width="2" stroke-linecap="round"/>
 <path d="M3.2 7.2 C3 9.5 4.5 11 6.5 10.8 L8 9 C7.5 7 6.5 6 5 6Z" fill="#fff"/>
 <path d="M4.6 8.6 L5.6 7.6" stroke="#e83a10" stroke-width="1.1"/>
</svg>
<div class="lbl" style="left:515px;top:528px">应收金额</div>
<div class="fld" style="left:581px;top:526px;width:86px;height:18px"></div>
<div class="a dig" style="left:582px;top:526px">10.5</div>
<div class="lbl" style="left:679px;top:528px">制单人</div>
<div class="fld" style="left:729px;top:526px;width:84px;height:18px;background:#ececec;border-bottom-color:#a0a0a0"></div>
<div class="lbl" style="left:730px;top:527px;color:#8a8a8a">系统管理员</div>
<div class="lbl" style="left:822px;top:528px">制单日期</div>
<div class="fld" style="left:889px;top:526px;width:103px;height:18px;background:#ececec;border-bottom-color:#a0a0a0"></div>
<div class="a dig" style="left:890px;top:526px;color:#8a8a8a">2017-12-25</div>

<!-- status bar -->
<div class="a" style="left:8px;top:561px;width:1059px;height:27px;background:linear-gradient(#cfcfcf 0px,#e6e6e6 2px,#f0f0f0 5px,#f0f0f0 100%)"></div>
<svg class="ico" style="left:12px;top:568px;--hole:#e02a20" width="16" height="16" viewBox="0 0 16 16">
 <rect x="0" y="0" width="16" height="16" rx="2" fill="#e02a20"/>
 <svg x="-1.5" y="-1" width="20" height="19" viewBox="0 0 40 38">
 <path d="M6.5 11.2 C10 10.4 12.6 12 13.4 15.5 L14.6 22 C14.6 24.5 15.2 26.5 16.5 28.5 L10.5 28.5 C8.6 25.5 8 21 8.4 16.5 C8.5 14.2 7.8 12.4 6.5 11.2 Z" fill="#fff"/>
 <path d="M13 17.5 C15.5 11.5 20 8 25.8 6.8 C24.5 10.5 20.5 15 16.2 20.5 C15 20 13.8 19 13 17.5 Z" fill="#fff"/>
 <path d="M6.2 25 C8.5 30 13 32.5 18.5 32.5 C25.5 32.5 30.2 26 31.2 16.8 C27 19.5 21 21.2 16 23.8 C14 24.8 12 25.2 10 24.8 C8.6 24.8 7.2 25 6.2 25 Z" fill="#fff"/>
 <path d="M17.6 26.2 C20.8 23.2 24.8 21.2 28.4 20.2 C27 25 23.5 27.8 18.8 28 C18.2 27.5 17.8 26.8 17.6 26.2 Z" fill="#e02a20"/>
 <g fill="#fff"><circle cx="28.5" cy="6.3" r="0.9"/><circle cx="30.6" cy="8.3" r="0.8"/><circle cx="27.3" cy="9" r="0.8"/><circle cx="29.6" cy="11" r="0.8"/><circle cx="26.2" cy="12.2" r="0.7"/></g>
</svg>
</svg>
<div class="a t12" style="left:31px;top:569px">应用中心：<span style="font-size:11px;letter-spacing:0.85px">127.0.0.1:7093</span></div>
<div class="sep" style="left:207px;top:567px;height:19px"></div>
<svg class="ico" style="left:216px;top:569px" width="15" height="15" viewBox="0 0 16 16">
 <defs><linearGradient id="gok" x1="0" y1="0" x2="0" y2="1"><stop offset="0" stop-color="#7ad070"/><stop offset="0.5" stop-color="#28a028"/><stop offset="1" stop-color="#108a10"/></linearGradient></defs>
 <circle cx="8" cy="8" r="7.4" fill="url(#gok)" stroke="#1a7a1a" stroke-width="0.6"/>
 <path d="M4 8.2 L7 11 L12 5" fill="none" stroke="#fff" stroke-width="2.4" stroke-linecap="round" stroke-linejoin="round"/>
</svg>
<div class="a t12" style="left:234px;top:569px">连接状态：正常</div>
<div class="sep" style="left:330px;top:567px;height:19px"></div>
<div class="a t12" style="left:344px;top:569px">账套：送货单模版</div>
<div class="sep" style="left:553px;top:567px;height:19px"></div>
<div class="a t12" style="left:568px;top:569px">操作员：系统管理员<span class="mono" style="font-size:10px">(admin)</span></div>
<div class="sep" style="left:736px;top:567px;height:19px"></div>
<div class="a t12" style="left:751px;top:569px">正式版 授权序列号：<span class="cnum">051696989</span></div>
<div class="sep" style="left:1045px;top:567px;height:19px"></div>
<svg class="ico" style="left:1057px;top:578px" width="9" height="9" viewBox="0 0 9 9"><g fill="#b0b0b0"><rect x="6" y="0" width="2" height="2"/><rect x="3" y="3" width="2" height="2"/><rect x="6" y="3" width="2" height="2"/><rect x="0" y="6" width="2" height="2"/><rect x="3" y="6" width="2" height="2"/><rect x="6" y="6" width="2" height="2"/></g></svg>

</body></html>
